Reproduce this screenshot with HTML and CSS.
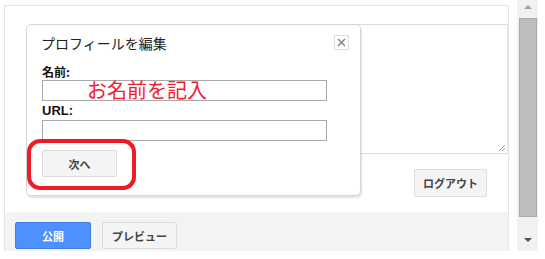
FILE: index.html
```html
<!DOCTYPE html>
<html lang="ja">
<head>
  <meta charset="UTF-8" />
  <meta name="viewport" content="width=device-width, initial-scale=1.0" />
  <title>プロフィールを編集</title>
  <link rel="stylesheet" href="styles.css">
</head>
<body>

  <div class="window">

    <!-- Halaman utama -->
    <div class="page">
      <div class="panel">
        <div class="editor">
          <svg class="grip" viewBox="0 0 8 8">
            <path d="M1 7 L7 1 M4 7 L7 4" stroke="#9a9a9a" stroke-width="1" fill="none"/>
          </svg>
        </div>
        <div class="account-row">
          <button class="btn">ログアウト</button>
        </div>
        <div class="action-bar">
          <button class="btn btn-primary">公開</button>
          <button class="btn">プレビュー</button>
        </div>
      </div>

      <!-- Dialog profil -->
      <div class="dialog">
        <div class="dialog-head">
          <div class="dialog-title">プロフィールを編集</div>
          <div class="dialog-close">
            <svg viewBox="0 0 9 9">
              <path d="M1 1 L8 8 M8 1 L1 8" stroke="#7a7a7a" stroke-width="1.3" fill="none"/>
            </svg>
          </div>
        </div>
        <div class="field">
          <label class="field-label">名前:</label>
          <input class="field-input" type="text">
        </div>
        <div class="field">
          <label class="field-label latin">URL:</label>
          <input class="field-input" type="text">
        </div>
        <button class="btn btn-next">次へ</button>
      </div>

      <!-- Catatan merah -->
      <div class="note-text">お名前を記入</div>
      <div class="note-ring"></div>
    </div>

    <!-- Scrollbar -->
    <div class="scrollbar">
      <div class="scroll-up"><span class="arrow-up"></span></div>
      <div class="scroll-thumb"></div>
      <div class="scroll-down"><span class="arrow-down"></span></div>
    </div>

  </div>

</body>
</html>
```

FILE: styles.css
```css
* {
  box-sizing: border-box;
}

body {
  margin: 0;
  background: #fff;
  font-family: "Noto Sans CJK JP", "Liberation Sans", sans-serif;
  color: #222;
}

.window {
  display: flex;
  height: 251px;
}

.page {
  position: relative;
  width: 517px;
  padding: 5px 8px 0 4px;
}

.panel {
  height: 246px;
  border: 1px solid #e5e5e5;
  border-bottom: none;
  padding-top: 18px;
  display: flex;
  flex-direction: column;
}

.editor {
  position: relative;
  height: 130px;
  margin-left: 36px;
  border: 1px solid #dcdcdc;
  border-right-color: #e5e5e5;
}

.grip {
  position: absolute;
  right: 1px;
  bottom: 1px;
  width: 8px;
  height: 8px;
}

.account-row {
  display: flex;
  justify-content: flex-end;
  margin-top: 15px;
  padding-right: 21px;
}

.action-bar {
  margin-top: 15px;
  height: 39px;
  background: #f3f3f3;
  display: flex;
  gap: 11px;
  padding: 10px 0 0 10px;
}

.btn {
  font-family: "Noto Sans CJK JP", sans-serif;
  font-size: 11px;
  font-weight: bold;
  color: #444;
  background: #f4f4f4;
  border: 1px solid #dcdcdc;
  border-radius: 2px;
  padding: 0;
  width: 73px;
  height: 28px;
}

.action-bar .btn {
  width: 76px;
  height: 27px;
}

.action-bar .btn + .btn {
  width: 75px;
}

.btn-primary {
  background: #4d90fe;
  border-color: #3d7fe8;
  color: #fff;
}

/* Dialog */
.dialog {
  position: absolute;
  left: 26px;
  top: 24px;
  width: 335px;
  height: 172px;
  background: #fff;
  border: 1px solid #d6d6d6;
  border-radius: 5px;
  box-shadow: 1px 2px 2px rgba(0, 0, 0, 0.12);
  padding: 8px 11px 0 15px;
}

.dialog-head {
  display: flex;
  justify-content: space-between;
  align-items: flex-start;
  height: 20px;
  margin-left: -1px;
}

.dialog-title {
  font-size: 14px;
  line-height: 20px;
  color: #222;
}

.dialog-close {
  width: 15px;
  height: 15px;
  margin-top: 2px;
  border: 1px solid #dedede;
  display: flex;
  align-items: center;
  justify-content: center;
}

.dialog-close svg {
  width: 9px;
  height: 9px;
}

.field {
  display: flex;
  flex-direction: column;
  margin-top: 2px;
}

.dialog-head + .field {
  margin-top: 11px;
}

.field-label {
  font-size: 12px;
  font-weight: bold;
  line-height: 15px;
  color: #111;
  margin-bottom: 2px;
}

.dialog-head + .field .field-label {
  margin-bottom: 1px;
}

.latin {
  font-family: "Liberation Sans", sans-serif;
  font-size: 13px;
}

.field-input {
  width: 285px;
  height: 21px;
  border: 1px solid #a9a9a9;
  padding: 0;
  margin: 0;
}

.btn-next {
  margin-top: 9px;
  width: 75px;
  height: 27px;
}

/* Catatan merah */
.note-text {
  position: absolute;
  left: 87px;
  top: 79px;
  font-size: 20px;
  line-height: 22px;
  color: #f2202c;
  pointer-events: none;
}

.note-ring {
  position: absolute;
  left: 27px;
  top: 139px;
  width: 109px;
  height: 51px;
  border: 4px solid #ed1c24;
  border-radius: 13px;
  pointer-events: none;
}

/* Scrollbar */
.scrollbar {
  width: 21px;
  background: #f1f1f1;
  display: flex;
  flex-direction: column;
}

.scroll-up {
  height: 18px;
  display: flex;
  justify-content: center;
  padding-top: 5px;
}

.arrow-up {
  width: 0;
  height: 0;
  border-left: 4px solid transparent;
  border-right: 4px solid transparent;
  border-bottom: 4px solid #a3a3a3;
}

.scroll-thumb {
  height: 199px;
  margin-left: 2px;
  width: 18px;
  background: #bdbdbd;
  border: 1px solid #a9a9a9;
}

.scroll-down {
  flex: 1;
  display: flex;
  justify-content: center;
  padding-top: 21px;
}

.arrow-down {
  width: 0;
  height: 0;
  border-left: 4px solid transparent;
  border-right: 4px solid transparent;
  border-top: 4px solid #505050;
}
```
